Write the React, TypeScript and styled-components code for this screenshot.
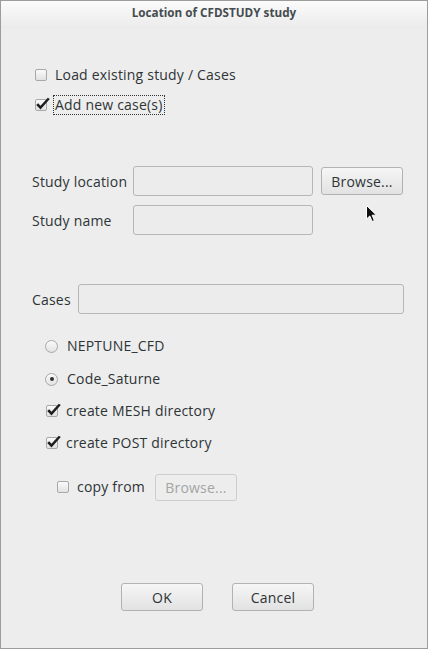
import React from "react";
import styled, { createGlobalStyle } from "styled-components";

const Global = createGlobalStyle`
  html, body { margin: 0; padding: 0; background: #ededed; }
  * { box-sizing: border-box; }
`;

const FONT = `"Open Sans", "DejaVu Sans", sans-serif`;

const Window = styled.div`
  position: relative;
  width: 428px;
  height: 649px;
  border: 1px solid #9c9c9c;
  background: #ededed;
  display: flex;
  flex-direction: column;
  font-family: ${FONT};
  font-size: 14px;
  letter-spacing: 0.2px;
  color: #2e3436;
`;

const TitleBar = styled.div`
  height: 27px;
  flex: none;
  display: flex;
  justify-content: center;
  padding-top: 3px;
  background: linear-gradient(#fbfbfb, #ebebeb);
  font-weight: bold;
  font-size: 11.7px;
  letter-spacing: 0;
  line-height: 16px;
  color: #454c50;
`;

const Row = styled.div<{ $top: number; $left: number; $gap: number; $h?: number }>`
  display: flex;
  align-items: center;
  margin-top: ${(p) => p.$top}px;
  padding-left: ${(p) => p.$left}px;
  gap: ${(p) => p.$gap}px;
  height: ${(p) => p.$h ?? 22}px;
`;

const Box = styled.span`
  position: relative;
  width: 12px;
  height: 12px;
  flex: none;
  border: 1px solid #a8a8a8;
  border-radius: 2px;
  background: linear-gradient(#fafafa, #e2e2e2);
`;

const Tick = styled.svg`
  position: absolute;
  left: -1px;
  top: -4px;
  overflow: visible;
`;

const Radio = styled.span<{ $on?: boolean }>`
  position: relative;
  width: 13px;
  height: 13px;
  flex: none;
  border: 1px solid #a8a8a8;
  border-radius: 50%;
  background: linear-gradient(#fafafa, #e2e2e2);
  display: flex;
  align-items: center;
  justify-content: center;
  &::after {
    content: "";
    display: ${(p) => (p.$on ? "block" : "none")};
    width: 4px;
    height: 4px;
    border-radius: 50%;
    background: #2e3436;
  }
`;

const Label = styled.span<{ $focus?: boolean }>`
  white-space: nowrap;
  line-height: 18px;
  padding: 0 1px;
  border: 1px ${(p) => (p.$focus ? "dotted #2e3436" : "solid transparent")};
`;

const Grid = styled.div`
  display: grid;
  grid-template-columns: 93px 180px 82px;
  column-gap: 8px;
  row-gap: 9px;
  align-items: center;
  margin-top: 50px;
  padding-left: 31px;
`;

const FieldLabel = styled.span`
  white-space: nowrap;
`;

const Field = styled.div<{ $w?: number }>`
  height: 30px;
  width: ${(p) => (p.$w ? `${p.$w}px` : "auto")};
  border: 1px solid #b6b6b6;
  border-radius: 3px;
  background: #ececec;
`;

const Button = styled.div<{ $disabled?: boolean; $w?: number; $h?: number; $ml?: number }>`
  width: ${(p) => p.$w ?? 82}px;
  height: ${(p) => p.$h ?? 28}px;
  margin-left: ${(p) => p.$ml ?? 0}px;
  display: flex;
  align-items: center;
  justify-content: center;
  border: 1px solid ${(p) => (p.$disabled ? "#cdcdcd" : "#b2b2b2")};
  border-radius: 3px;
  background: ${(p) => (p.$disabled ? "#ededed" : "linear-gradient(#f6f6f6, #e2e2e2)")};
  color: ${(p) => (p.$disabled ? "#a3a5a5" : "#2e3436")};
  white-space: nowrap;
`;

const CasesRow = styled.div`
  display: flex;
  align-items: center;
  margin-top: 49px;
  padding-left: 31px;
  gap: 8px;
`;

const CasesLabel = styled.span`
  width: 38px;
  white-space: nowrap;
`;

const Footer = styled.div`
  display: flex;
  gap: 29px;
  margin-top: 82px;
  padding-left: 120px;
`;

const Cursor = styled.svg`
  position: absolute;
  left: 364px;
  top: 203px;
`;

const Check = () => (
  <Box>
    <Tick width="16" height="16" viewBox="0 0 16 16">
      <path d="M1.2 9 L5.5 13.4 L14.8 3 L12.8 1.8 L5.5 9.8 L3.2 7.3 Z" fill="#1e1e1e" />
    </Tick>
  </Box>
);

export default function App() {
  return (
    <>
      <Global />
      <Window>
        <TitleBar>Location of CFDSTUDY study</TitleBar>
        <Row $top={36} $left={34} $gap={6}>
          <Box />
          <Label>Load existing study / Cases</Label>
        </Row>
        <Row $top={8} $left={34} $gap={6}>
          <Check />
          <Label $focus>Add new case(s)</Label>
        </Row>
        <Grid>
          <FieldLabel>Study location</FieldLabel>
          <Field />
          <Button>Browse...</Button>
          <FieldLabel>Study name</FieldLabel>
          <Field />
          <span />
        </Grid>
        <CasesRow>
          <CasesLabel>Cases</CasesLabel>
          <Field $w={326} />
        </CasesRow>
        <Row $top={21} $left={44} $gap={7}>
          <Radio />
          <Label>NEPTUNE_CFD</Label>
        </Row>
        <Row $top={11} $left={44} $gap={7}>
          <Radio $on />
          <Label>Code_Saturne</Label>
        </Row>
        <Row $top={10} $left={45} $gap={6}>
          <Check />
          <Label>create MESH directory</Label>
        </Row>
        <Row $top={10} $left={45} $gap={6}>
          <Check />
          <Label>create POST directory</Label>
        </Row>
        <Row $top={19} $left={56} $gap={6} $h={28}>
          <Box />
          <Label>copy from</Label>
          <Button $disabled $h={27} $ml={2}>Browse...</Button>
        </Row>
        <Footer>
          <Button>OK</Button>
          <Button>Cancel</Button>
        </Footer>
        <Cursor width="14" height="20" viewBox="0 0 14 20">
          <path d="M1.5 1.5 L1.5 15 L4.8 12 L7.2 17.5 L9.4 16.5 L7.1 11.2 L11.5 11.2 Z" fill="#111" stroke="#fff" strokeWidth="1" />
        </Cursor>
      </Window>
    </>
  );
}
